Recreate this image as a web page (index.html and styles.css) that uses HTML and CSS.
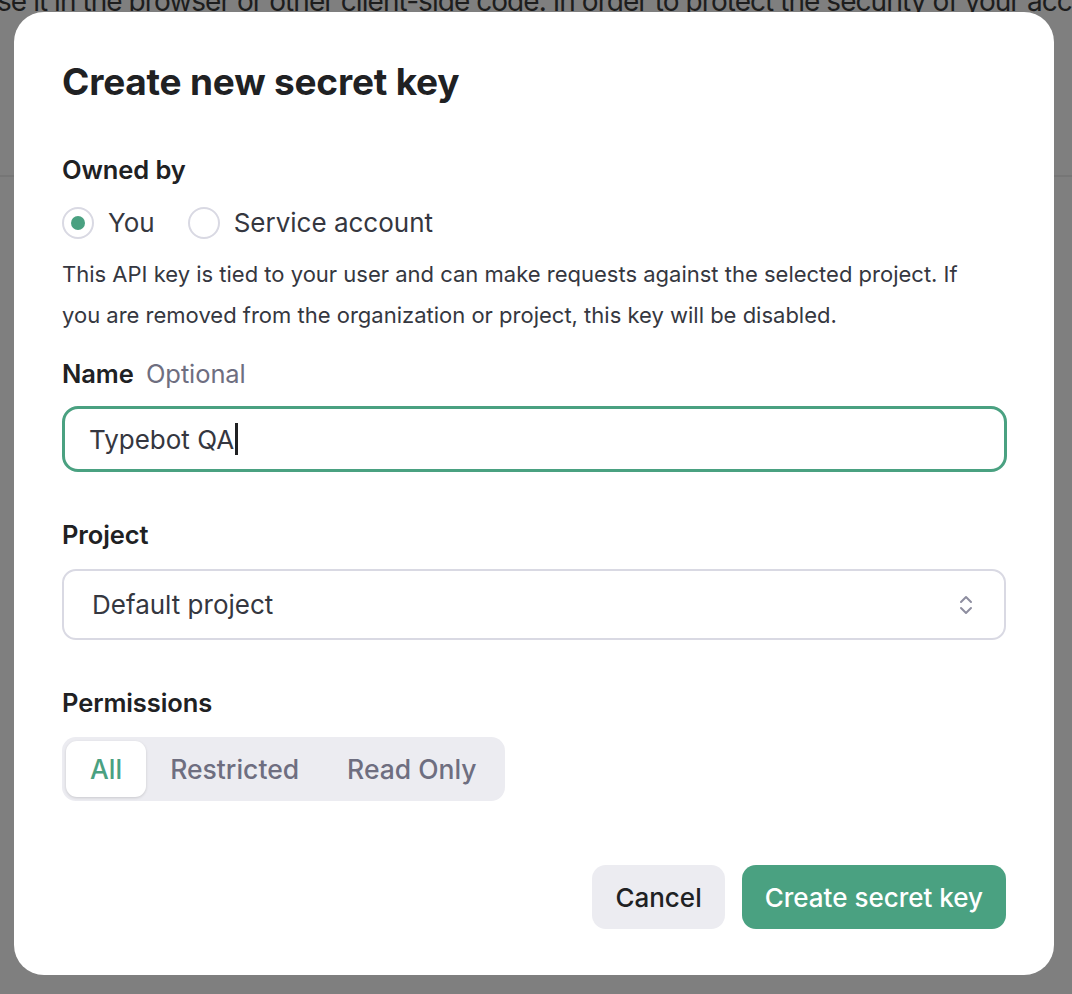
FILE: index.html
```html
<!DOCTYPE html>
<html>
<head>
<meta charset="utf-8">
<link rel="stylesheet" href="styles.css">
</head>
<body>
<div class="page">
  <p class="behind-text">se it in the browser or other client-side code. In order to protect the security of your acco</p>
  <div class="behind-rule"></div>
</div>
<div class="modal">
  <h1 class="title">Create new secret key</h1>
  <div class="field owned">
    <div class="label">Owned by</div>
    <div class="radios">
      <label class="radio checked"><span class="radio-dot"></span>You</label>
      <label class="radio"><span class="radio-dot"></span>Service account</label>
    </div>
    <p class="desc">This API key is tied to your user and can make requests against the selected project. If you are removed from the organization or project, this key will be disabled.</p>
  </div>
  <div class="field name">
    <div class="label">Name <span class="optional">Optional</span></div>
    <div class="input focused"><span>Typebot QA</span><span class="caret"></span></div>
  </div>
  <div class="field project">
    <div class="label">Project</div>
    <div class="input select">
      <span>Default project</span>
      <svg class="chev" width="16" height="22" viewBox="0 0 16 22" fill="none" stroke="#8e8ea0" stroke-width="2" stroke-linecap="round" stroke-linejoin="round"><path d="M3 8 L8 3 L13 8"/><path d="M3 14 L8 19 L13 14"/></svg>
    </div>
  </div>
  <div class="field perms">
    <div class="label">Permissions</div>
    <div class="segmented">
      <span class="seg active">All</span>
      <span class="seg">Restricted</span>
      <span class="seg">Read Only</span>
    </div>
  </div>
  <div class="actions">
    <button class="btn cancel">Cancel</button>
    <button class="btn primary">Create secret key</button>
  </div>
</div>
</body>
</html>
```

FILE: styles.css
```css
html, body {
  margin: 0;
  padding: 0;
}
body {
  width: 1072px;
  height: 994px;
  overflow: hidden;
  background: #7f7f7f;
  font-family: Inter, "Liberation Sans", sans-serif;
  position: relative;
}
.page {
  height: 994px;
  overflow: hidden;
}
.behind-text {
  margin: 0;
  margin-top: -17px;
  white-space: nowrap;
  font-size: 28px;
  letter-spacing: -0.95px;
  color: #1d1d1d;
  line-height: 36px;
  margin-left: -3px;
}
.behind-rule {
  margin-top: 156px;
  height: 2px;
  background: #767676;
}
.modal {
  position: absolute;
  left: 14px;
  top: 12px;
  width: 1040px;
  height: 963px;
  box-sizing: border-box;
  background: #fff;
  border-radius: 30px;
  padding: 50px 48px 0 48px;
  color: #202123;
  display: flex;
  flex-direction: column;
}
.title {
  margin: 0;
  font-size: 37px;
  font-weight: 700;
  letter-spacing: -0.2px;
  line-height: 40px;
  color: #202123;
}
.field {
  display: flex;
  flex-direction: column;
}
.label {
  font-size: 25.5px;
  font-weight: 600;
  line-height: 30px;
  color: #202123;
  letter-spacing: -0.1px;
}
.optional {
  font-weight: 400;
  color: #6e6e80;
  margin-left: 6px;
}
.owned {
  margin-top: 53px;
}
.radios {
  display: flex;
  gap: 33px;
  margin-top: 21px;
}
.radio {
  display: flex;
  align-items: center;
  gap: 14px;
  font-size: 26px;
  color: #353740;
  line-height: 34px;
}
.radio-dot {
  width: 32px;
  height: 32px;
  box-sizing: border-box;
  border: 2px solid #d9d9e3;
  border-radius: 50%;
  display: flex;
  align-items: center;
  justify-content: center;
}
.radio.checked .radio-dot::after {
  content: "";
  width: 14px;
  height: 14px;
  border-radius: 50%;
  background: #4aa181;
}
.desc {
  margin: 14px 0 0 0;
  padding-right: 30px;
  font-size: 22px;
  line-height: 41px;
  color: #353740;
}
.name {
  margin-top: 23px;
}
.input {
  margin-top: 17px;
  height: 66px;
  box-sizing: border-box;
  border: 2px solid #d9d9e3;
  border-radius: 16px;
  display: flex;
  align-items: center;
  padding-left: 28px;
  font-size: 26px;
  color: #353740;
}
.input.focused {
  border: 3px solid #4aa181;
  padding-left: 24px;
  width: 945px;
}
.caret {
  width: 3px;
  height: 32px;
  background: #202123;
  margin-left: 1px;
}
.project {
  margin-top: 48px;
}
.select {
  height: 71px;
  margin-top: 19px;
  padding-left: 28px;
  padding-right: 30px;
  justify-content: space-between;
  border-radius: 14px;
}
.perms {
  margin-top: 48px;
}
.segmented {
  margin-top: 19px;
  align-self: flex-start;
  display: flex;
  background: #ececf1;
  border-radius: 14px;
  padding: 4px;
  gap: 0;
}
.seg {
  height: 56px;
  display: flex;
  align-items: center;
  padding: 0 24px;
  font-size: 26.5px;
  font-weight: 500;
  color: #6e6e80;
  border-radius: 11px;
}
.seg.active {
  background: #fff;
  color: #4aa181;
  box-shadow: 0 1px 3px rgba(0,0,0,0.15);
}
.actions {
  margin-top: 64px;
  display: flex;
  justify-content: flex-end;
  gap: 17px;
  padding-right: 0;
}
.btn {
  height: 64px;
  border: none;
  border-radius: 14px;
  font-family: inherit;
  font-size: 26px;
  font-weight: 500;
  padding: 0 23px;
}
.cancel {
  background: #ececf1;
  color: #202123;
}
.primary {
  background: #4aa181;
  color: #fff;
}
```
